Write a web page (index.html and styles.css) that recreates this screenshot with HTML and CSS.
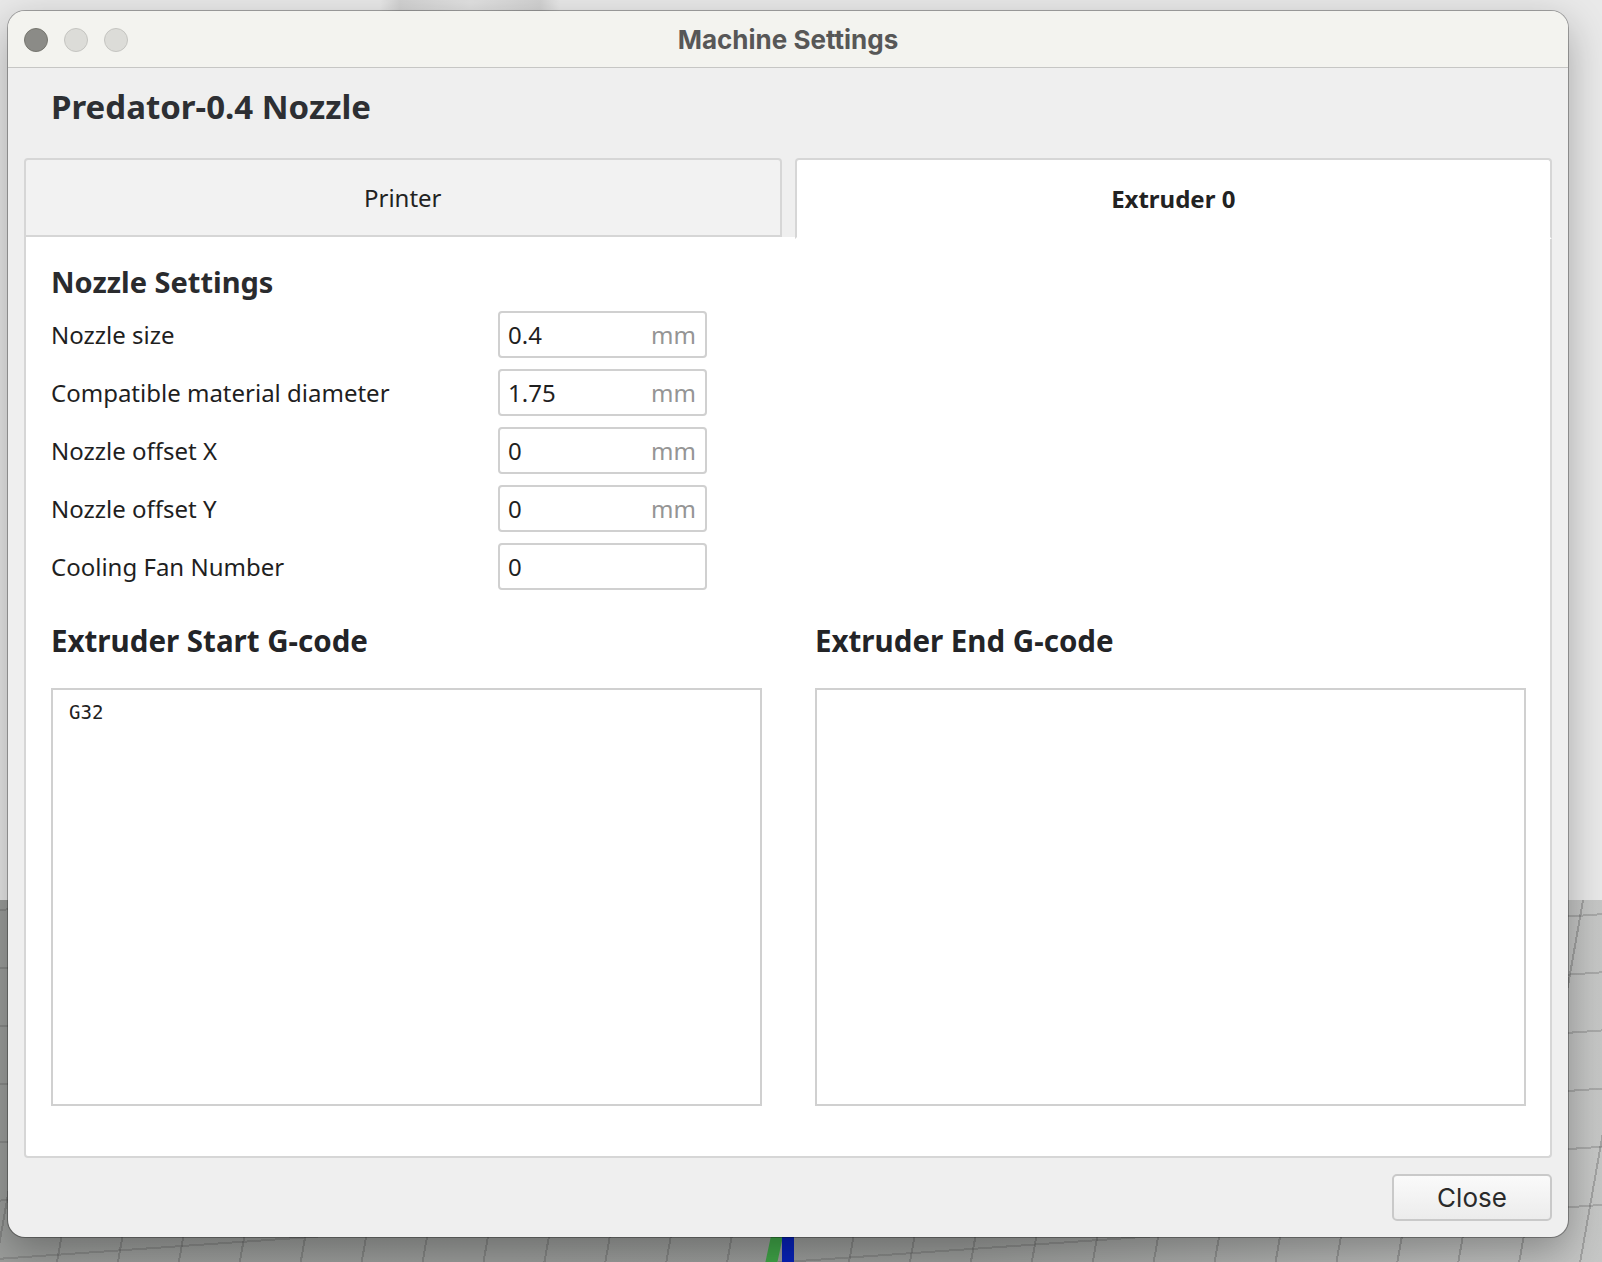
FILE: index.html
```html
<!DOCTYPE html>
<html lang="en">
<head>
    <meta charset="UTF-8">
    <title>Machine Settings</title>
    <link rel="stylesheet" href="styles.css">
</head>
<body>
    <div class="desktop">
        <div class="floor"></div>
        <div class="axis axis-green"></div>
        <div class="axis axis-blue"></div>

        <div class="window">
            <div class="titlebar">
                <div class="lights">
                    <span class="light light-close"></span>
                    <span class="light"></span>
                    <span class="light"></span>
                </div>
                <div class="title">Machine Settings</div>
                <div></div>
            </div>

            <div class="dialog">
                <h1 class="machine-name">Predator-0.4 Nozzle</h1>

                <div class="tabs">
                    <div class="tab">Printer</div>
                    <div class="tab active">Extruder 0</div>
                </div>

                <div class="panel">
                    <h2 class="section-title">Nozzle Settings</h2>

                    <div class="settings">
                        <div class="setting-row">
                            <label>Nozzle size</label>
                            <div class="field"><span>0.4</span><span class="unit">mm</span></div>
                        </div>
                        <div class="setting-row">
                            <label>Compatible material diameter</label>
                            <div class="field"><span>1.75</span><span class="unit">mm</span></div>
                        </div>
                        <div class="setting-row">
                            <label>Nozzle offset X</label>
                            <div class="field"><span>0</span><span class="unit">mm</span></div>
                        </div>
                        <div class="setting-row">
                            <label>Nozzle offset Y</label>
                            <div class="field"><span>0</span><span class="unit">mm</span></div>
                        </div>
                        <div class="setting-row">
                            <label>Cooling Fan Number</label>
                            <div class="field"><span>0</span></div>
                        </div>
                    </div>

                    <div class="gcode-columns">
                        <div class="gcode-col">
                            <h2 class="gcode-title">Extruder Start G-code</h2>
                            <div class="gcode-box">G32</div>
                        </div>
                        <div class="gcode-col">
                            <h2 class="gcode-title">Extruder End G-code</h2>
                            <div class="gcode-box"></div>
                        </div>
                    </div>
                </div>

                <div class="footer">
                    <button type="button" class="btn">Close</button>
                </div>
            </div>
        </div>
    </div>
</body>
</html>
```

FILE: styles.css
```css
* {
    margin: 0;
    padding: 0;
    box-sizing: border-box;
}

body {
    font-family: "Noto Sans", sans-serif;
    background: #e8e8e8;
}

/* fundo: a janela do Cura atrás do diálogo */
.desktop {
    position: relative;
    width: 1602px;
    height: 1262px;
    overflow: hidden;
    padding: 11px 0 0 8px;
    background:
        linear-gradient(90deg, transparent 380px, rgba(170,170,170,0.35) 400px, rgba(200,200,200,0.2) 470px, rgba(170,170,170,0.35) 540px, transparent 560px) 0 0 / 100% 11px no-repeat,
        #e9e9e9;
}

.floor {
    position: absolute;
    top: 900px;
    left: 0;
    right: 0;
    bottom: 0;
    background:
        repeating-linear-gradient(100deg, transparent 0 58px, rgba(80,80,80,0.3) 58px 60px),
        repeating-linear-gradient(-4deg, transparent 0 56px, rgba(80,80,80,0.25) 56px 58px),
        linear-gradient(90deg, #9c9e9c 0, #9a9c9a 60%, #c6c7c6 100%);
}

.axis {
    position: absolute;
    top: 1230px;
    height: 40px;
    width: 12px;
}

.axis-green {
    left: 768px;
    background: #3fa447;
    transform: skewX(-12deg);
}

.axis-blue {
    left: 782px;
    background: #0722b8;
}

.window {
    position: relative;
    width: 1560px;
    height: 1226px;
    border-radius: 17px;
    background: #efefef;
    overflow: hidden;
    display: flex;
    flex-direction: column;
    box-shadow: 0 0 0 1px rgba(0,0,0,0.3), 0 14px 40px rgba(0,0,0,0.3);
}

.titlebar {
    height: 57px;
    background: #f3f3ef;
    border-bottom: 1px solid #c6c6c4;
    display: grid;
    grid-template-columns: 1fr auto 1fr;
    align-items: center;
}

.lights {
    display: flex;
    gap: 16px;
    padding-left: 16px;
    padding-top: 2px;
}

.light {
    width: 24px;
    height: 24px;
    border-radius: 50%;
    background: #dcdcd8;
    border: 1px solid #c4c4c0;
}

.light-close {
    background: #8b8b87;
    border-color: #76766f;
}

.title {
    font-family: Inter, "Liberation Sans", sans-serif;
    font-size: 26px;
    font-weight: 700;
    color: #575757;
}

.dialog {
    flex: 1;
    display: flex;
    flex-direction: column;
    padding: 0 16px 16px 16px;
}

.machine-name {
    margin: 19px 0 31px 27px;
    font-size: 33px;
    line-height: 40px;
    font-weight: 700;
    color: #2d2f33;
}

.tabs {
    display: flex;
    gap: 13px;
}

.tab {
    flex: 1;
    height: 79px;
    display: flex;
    align-items: center;
    justify-content: center;
    font-size: 24px;
    color: #222;
    background: #f2f2f2;
    border: 2px solid #d6d6d6;
    border-radius: 4px 4px 0 0;
}

.tab.active {
    position: relative;
    z-index: 1;
    margin-bottom: -2px;
    height: 81px;
    background: #fff;
    border-bottom-color: #fff;
    font-weight: 700;
}

.panel {
    flex: 1;
    background: #fff;
    border: 2px solid #d6d6d6;
    border-top-width: 0;
    border-radius: 0 0 4px 4px;
    padding: 27px 24px 0 25px;
}

.section-title {
    font-size: 29px;
    line-height: 36px;
    font-weight: 700;
    color: #2a2b2e;
}

.settings {
    display: flex;
    flex-direction: column;
    gap: 11px;
    margin-top: 11px;
}

.setting-row {
    display: flex;
    align-items: center;
    height: 47px;
}

.setting-row label {
    width: 447px;
    font-size: 24px;
    color: #1f1f1f;
}

.field {
    width: 209px;
    height: 47px;
    border: 2px solid #d0d0d0;
    border-radius: 4px;
    padding: 0 9px 0 8px;
    display: flex;
    align-items: center;
    justify-content: space-between;
    font-size: 24px;
    color: #1f1f1f;
}

.field .unit {
    color: #959595;
}

.gcode-columns {
    display: grid;
    grid-template-columns: 1fr 1fr;
    gap: 53px;
    margin-top: 32px;
}

.gcode-title {
    font-size: 29.5px;
    line-height: 38px;
    font-weight: 700;
    color: #232427;
    margin-bottom: 28px;
}

.gcode-box {
    height: 418px;
    border: 2px solid #d0d0d0;
    padding: 10px 16px;
    font-family: "DejaVu Sans Mono", monospace;
    font-size: 19px;
    line-height: 24px;
    color: #222;
}

.footer {
    display: flex;
    justify-content: flex-end;
    padding-top: 16px;
}

.btn {
    width: 160px;
    height: 47px;
    border: 2px solid #c9c9c9;
    border-radius: 5px;
    background: linear-gradient(180deg, #fafafa 0%, #ececec 100%);
    font-family: Inter, "Liberation Sans", sans-serif;
    font-size: 26px;
    color: #2a2a2a;
    cursor: pointer;
}
```
